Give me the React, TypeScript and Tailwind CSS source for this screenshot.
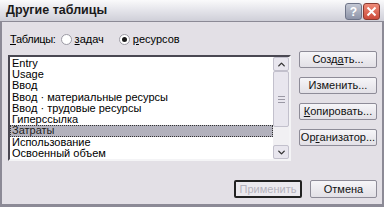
import { ChevronDown, ChevronUp } from "lucide-react";

const items = [
  "Entry",
  "Usage",
  "Ввод",
  "Ввод · материальные ресурсы",
  "Ввод · трудовые ресурсы",
  "Гиперссылка",
  "Затраты",
  "Использование",
  "Освоенный объем",
];

function Radio({ checked }: { checked?: boolean }) {
  return (
    <span className="inline-flex h-[11px] w-[11px] items-center justify-center rounded-full border border-[#9c9aa4] bg-white">
      {checked && <span className="h-[5px] w-[5px] rounded-full bg-[#1a1a1a]" />}
    </span>
  );
}

function SideButton({ children }: { children: React.ReactNode }) {
  return (
    <button className="flex h-[17px] w-[78px] items-center justify-center rounded-[2px] border border-[#8e8c98] bg-gradient-to-b from-[#f6f5f8] to-[#e2e0e6] text-[11px] leading-none text-[#111]">
      {children}
    </button>
  );
}

export default function App() {
  return (
    <div
      className="flex h-[207px] w-[384px] flex-col overflow-hidden bg-[#e3e0e6] text-[11px] text-black"
      style={{ fontFamily: '"Liberation Sans", Arial, sans-serif' }}
    >
      {/* Title bar */}
      <div className="flex h-[22px] shrink-0 items-center justify-between border-b border-[#8c8a96] bg-gradient-to-b from-[#fafafb] via-[#e4e4ea] to-[#cfcfd8] pl-[6px] pr-[4px]">
        <span className="text-[12.5px] font-bold text-[#1a1a1a]">Другие таблицы</span>
        <div className="mt-[2px] flex gap-[1px]">
          <div className="flex h-[17px] w-[17px] items-center justify-center rounded-[3px] border border-[#6e7488] bg-gradient-to-b from-[#c4c8d4] to-[#8e94a8] text-[12px] font-bold text-white">
            ?
          </div>
          <div className="flex h-[17px] w-[17px] items-center justify-center rounded-[3px] border border-[#8a3a30] bg-gradient-to-b from-[#ee8a78] to-[#cc4a3a]">
            <svg width="11" height="11" viewBox="0 0 11 11">
              <path d="M1.5 1.5 L9.5 9.5 M9.5 1.5 L1.5 9.5" stroke="white" strokeWidth="2" />
            </svg>
          </div>
        </div>
      </div>

      {/* Body */}
      <div className="flex flex-1 flex-col border-x-[2px] border-b-[3px] border-[#8c8a96] pl-[6px] pr-[5px]">
        <div className="mt-[10px] flex items-start">
          <div className="flex w-[283px] flex-col">
            <div className="flex h-[14px] items-center pl-[2px]">
              <span className="tracking-[-0.3px]">
                <span className="underline">Т</span>аблицы:
              </span>
              <span className="ml-[5px] flex items-center gap-[3px]">
                <Radio />
                <span>
                  <span className="underline">з</span>адач
                </span>
              </span>
              <span className="ml-[15px] flex items-center gap-[3px]">
                <Radio checked />
                <span>
                  <span className="underline">р</span>есурсов
                </span>
              </span>
            </div>

            {/* List box */}
            <div className="mt-[9px] flex h-[106px] border-[2px] border-t-[#4a4852] border-l-[#4a4852] border-r-[#f4f4f6] border-b-[#f4f4f6] bg-white">
              <div className="flex flex-1 flex-col pt-[1px]">
                {items.map((item) =>
                  item === "Затраты" ? (
                    <div
                      key={item}
                      className="flex h-[11.6px] items-center border border-dotted border-[#333] bg-[#b2b1bc] pl-[1px] leading-none text-[#222]"
                    >
                      {item}
                    </div>
                  ) : (
                    <div key={item} className="flex h-[11.6px] items-center pl-[2px] leading-none">
                      {item}
                    </div>
                  )
                )}
              </div>
              {/* Scrollbar */}
              <div className="flex w-[16px] flex-col bg-[#f1f0f3]">
                <div className="flex h-[14px] items-center justify-center rounded-[2px] border border-[#c2c0cc] bg-[#e8e6ee]">
                  <ChevronUp size={11} strokeWidth={3} className="text-[#333]" />
                </div>
                <div className="flex h-[56px] flex-col items-center justify-center gap-[2px] rounded-[2px] border border-[#c2c0cc] bg-[#e8e6ee]">
                  <span className="h-px w-[7px] bg-[#9a98a4]" />
                  <span className="h-px w-[7px] bg-[#9a98a4]" />
                  <span className="h-px w-[7px] bg-[#9a98a4]" />
                </div>
                <div className="flex-1" />
                <div className="flex h-[14px] items-center justify-center rounded-[2px] border border-[#c2c0cc] bg-[#e8e6ee]">
                  <ChevronDown size={11} strokeWidth={3} className="text-[#333]" />
                </div>
              </div>
            </div>
          </div>

          {/* Side buttons */}
          <div className="ml-[8px] mt-[19px] flex flex-col gap-[9px]">
            <SideButton>
              Созд<span className="underline">а</span>ть...
            </SideButton>
            <SideButton>Изменить...</SideButton>
            <SideButton>
              <span className="underline">К</span>опировать...
            </SideButton>
            <SideButton>
              Ор<span className="underline">г</span>анизатор...
            </SideButton>
          </div>
        </div>

        {/* Bottom buttons */}
        <div className="mt-[19px] flex justify-end gap-[8px]">
          <button className="flex h-[18px] w-[68px] items-center justify-center rounded-[2px] border-[2px] border-[#222] bg-[#ebe9ee] text-[11px] leading-none text-[#b4b2bc]">
            Применить
          </button>
          <button className="flex h-[18px] w-[67px] items-center justify-center rounded-[2px] border border-[#8e8c98] bg-gradient-to-b from-[#f6f5f8] to-[#e2e0e6] text-[11px] leading-none text-[#111]">
            Отмена
          </button>
        </div>
      </div>
    </div>
  );
}
